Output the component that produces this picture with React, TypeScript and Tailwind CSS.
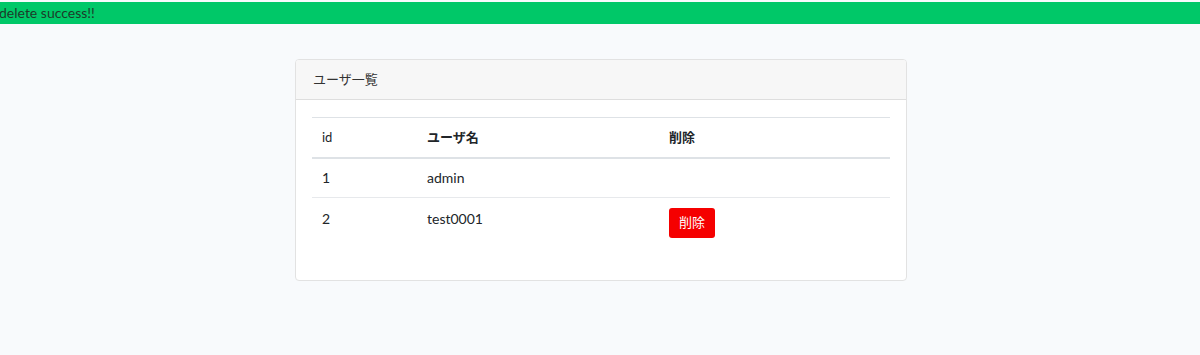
export default function App() {
  const font = { fontFamily: 'Lato, "Noto Sans CJK JP", sans-serif' };
  return (
    <div className="min-h-[355px] bg-[#f8fafc] text-[#212529] text-[14px] pt-[2px]" style={font}>
      <div className="bg-[#00c868] h-[22px] leading-[22px] text-[14px] text-[#1d3b2a] -ml-[1px]">delete success!!</div>
      <div className="flex justify-center pt-[35px] pl-[2px]">
        <div className="w-[612px] h-[222px] bg-white border border-[#e2e2e2] rounded-[4px] overflow-hidden">
          <div className="h-[40px] bg-[#f7f7f7] border-b border-[#dedede] px-[17px] flex items-center text-[13px] text-[#333]">ユーザ一覧</div>
          <div className="px-[16px] pt-[17px]">
            <table className="w-full border-collapse">
              <thead>
                <tr className="border-t border-[#dee2e6] border-b-2">
                  <th className="w-[105px] text-left font-normal px-[10px] h-[40px] text-[13px]">id</th>
                  <th className="w-[242px] text-left font-bold px-[10px] h-[40px] text-[13px]">ユーザ名</th>
                  <th className="text-left font-bold px-[10px] h-[40px] text-[13px]">削除</th>
                </tr>
              </thead>
              <tbody>
                <tr className="border-b border-[#e7e9ec]">
                  <td className="px-[10px] h-[40px] align-middle">1</td>
                  <td className="px-[10px] h-[40px] align-middle">admin</td>
                  <td className="px-[10px] h-[40px]"></td>
                </tr>
                <tr>
                  <td className="px-[10px] pt-[10px] align-top">2</td>
                  <td className="px-[10px] pt-[10px] align-top">test0001</td>
                  <td className="px-[10px] pt-[10px] pb-[12px] align-top">
                    <button className="w-[46px] h-[30px] bg-[#f50000] text-white text-[13px] rounded-[3px]">削除</button>
                  </td>
                </tr>
              </tbody>
            </table>
          </div>
        </div>
      </div>
    </div>
  );
}
